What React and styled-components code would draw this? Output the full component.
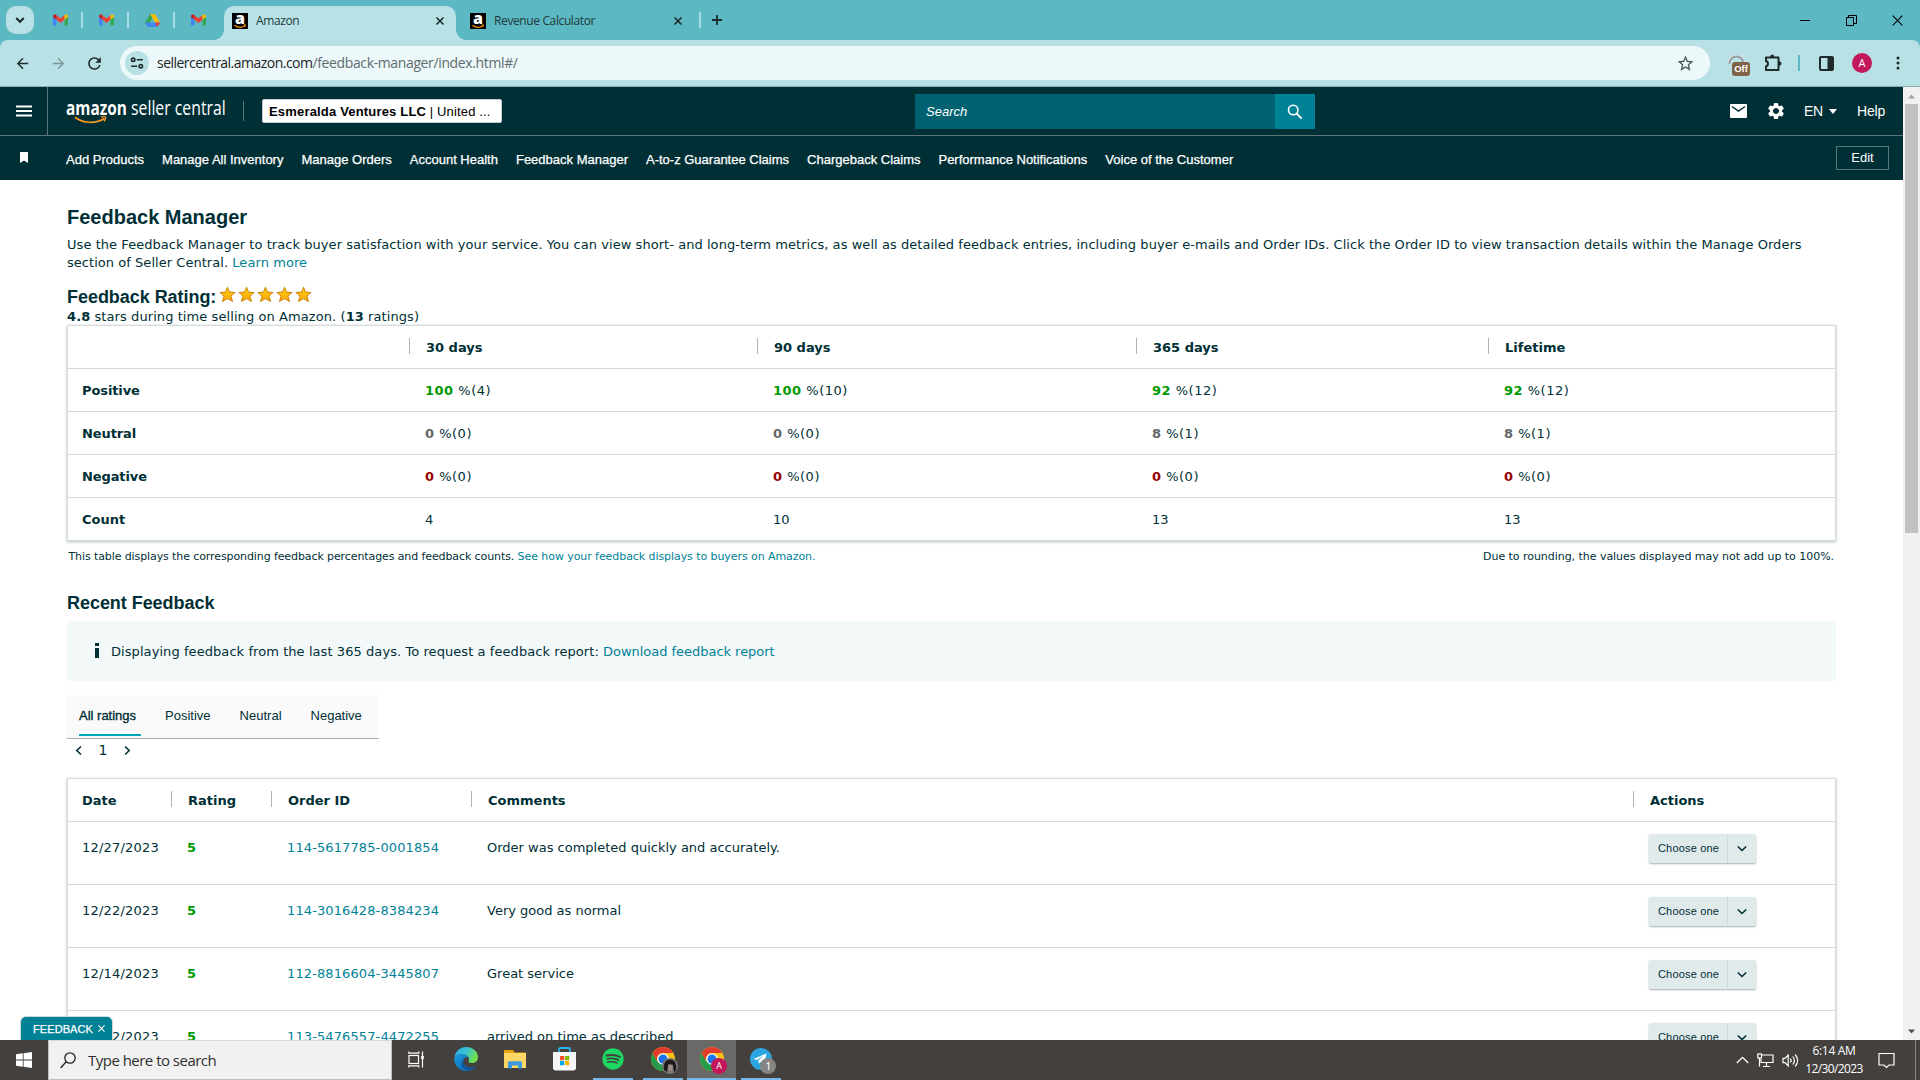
import React from 'react';
import styled, { createGlobalStyle, css } from 'styled-components';
import { MdArrowBack, MdArrowForward, MdRefresh, MdStarBorder, MdSettings } from 'react-icons/md';
import { FaSpotify } from 'react-icons/fa';

const arial = '"Liberation Sans", Arial, sans-serif';
const verdana = '"DejaVu Sans", Verdana, sans-serif';
const segoe = '"Open Sans", "Segoe UI", sans-serif';
const ink = '#002f36';
const link = '#008296';
const line = '#d5dbdb';

const GlobalStyle = createGlobalStyle`
  *, *::before, *::after { box-sizing: border-box; }
  html, body { margin: 0; padding: 0; overflow: hidden; }
  svg { display: block; flex: none; overflow: visible; }
`;

const Screen = styled.div`
  width: 1920px;
  height: 1080px;
  display: flex;
  flex-direction: column;
  overflow: hidden;
  background: #5cb8c2;
`;

const T = styled.span`
  letter-spacing: ${(p) => p.$ls || 0}px;
  white-space: pre;
`;

/* ---------- Browser chrome ---------- */

const TabStrip = styled.div`
  height: 40px;
  flex: none;
  display: flex;
  align-items: center;
  padding-left: 6px;
  font: 12px ${segoe};
  color: #1f3a3d;
`;

const TabSearch = styled.div`
  width: 28px;
  height: 28px;
  border-radius: 10px;
  background: #b8e1e5;
  display: flex;
  align-items: center;
  justify-content: center;
  margin-right: 3px;
`;

const PinnedTab = styled.div`
  width: 46px;
  height: 16px;
  display: flex;
  align-items: center;
  justify-content: center;
  border-right: ${(p) => (p.$last ? 'none' : '2px solid #a9dce1')};
  padding-left: ${(p) => (p.$last ? '0' : '2px')};
`;

const Tab = styled.div`
  position: relative;
  height: 34px;
  align-self: flex-end;
  display: flex;
  align-items: center;
  width: ${(p) => p.$w}px;
  margin-left: ${(p) => (p.$active ? 3 : 0)}px;
  padding: 0 ${(p) => (p.$active ? 12 : 9)}px 5px ${(p) => (p.$active ? 8 : 14)}px;
  gap: 8px;
  border-radius: 10px 10px 0 0;
  ${(p) =>
    p.$active &&
    css`
      background: #b8e1e5;
      &::before,
      &::after {
        content: '';
        position: absolute;
        bottom: 0;
        width: 10px;
        height: 10px;
      }
      &::before {
        left: -10px;
        background: radial-gradient(circle at 0 0, transparent 9.5px, #b8e1e5 10px);
      }
      &::after {
        right: -10px;
        background: radial-gradient(circle at 100% 0, transparent 9.5px, #b8e1e5 10px);
      }
    `}
`;

const TabTitle = styled.span`
  flex: 1;
  letter-spacing: -0.38px;
`;

const NewTab = styled.div`
  display: flex;
  align-items: center;
  height: 16px;
  border-left: 2px solid #a9dce1;
  padding-left: 10px;
  margin-left: 8px;
`;

const WindowButtons = styled.div`
  margin-left: auto;
  display: flex;
  align-items: center;
  height: 40px;
`;

const WinBtn = styled.div`
  width: 46px;
  display: flex;
  justify-content: center;
`;

const Toolbar = styled.div`
  height: 47px;
  flex: none;
  display: flex;
  align-items: center;
  padding-left: 4px;
  background: #b8e1e5;
  border-bottom: 1px solid #86abb0;
  border-radius: 8px 8px 0 0;
  color: #1f2a2c;
`;

const ToolBtn = styled.div`
  width: 36px;
  display: flex;
  justify-content: center;
  opacity: ${(p) => (p.$dim ? 0.4 : 1)};
`;

const Omnibox = styled.div`
  width: 1590px;
  height: 34px;
  margin-left: 8px;
  border-radius: 17px;
  background: #ecf8f9;
  display: flex;
  align-items: center;
  padding: 0 15px 0 5px;
  font: 14px/20px ${segoe};
  color: #1d2426;
`;

const SiteInfo = styled.div`
  width: 24px;
  height: 24px;
  border-radius: 50%;
  background: #b8e1e5;
  display: flex;
  align-items: center;
  justify-content: center;
  margin-right: 8px;
`;

const UrlPath = styled.span`
  color: #5f6d6f;
  letter-spacing: -0.37px;
  flex: 1;
`;

const ToolbarRight = styled.div`
  flex: 1;
  display: flex;
  align-items: center;
  padding-left: 18px;
`;

const OffExtension = styled.div`
  width: 22px;
  height: 22px;
  margin: 4px 14px 0 0;
  display: flex;
  align-items: flex-end;
  justify-content: flex-end;
  background: radial-gradient(ellipse at 50% 100%, transparent 50%, #7c8486 54%, #d9dede 72%, transparent 76%) 0 1px / 17px 9px no-repeat;
`;

const OffBadge = styled.span`
  width: 18px;
  height: 14px;
  border-radius: 3px;
  background: #7f6344;
  color: #fff;
  font: bold 9.5px/14px ${arial};
  text-align: center;
`;

const ToolDivider = styled.div`
  width: 2px;
  height: 16px;
  background: #5cb8c2;
  margin: 0 19px 0 16px;
`;

const Avatar = styled.div`
  width: 20px;
  height: 20px;
  border-radius: 50%;
  background: #c2185b;
  color: #fff;
  font: 11px/20px ${segoe};
  text-align: center;
  margin: 0 24px 0 18px;
`;

/* ---------- Viewport ---------- */

const Viewport = styled.div`
  height: 953px;
  flex: none;
  display: flex;
  overflow: hidden;
  background: #fff;
  position: relative;
`;

const Page = styled.div`
  width: 1903px;
  flex: none;
  color: ${ink};
`;

const Scrollbar = styled.div`
  width: 17px;
  display: flex;
  flex-direction: column;
  align-items: center;
  justify-content: space-between;
  background: #f1f1f1;
  padding: 7px 0 6px;
`;

const ScrollThumb = styled.div`
  width: 13px;
  height: 429px;
  margin-top: 5px;
  margin-bottom: auto;
  background: #c1c1c1;
`;

const TopBar = styled.div`
  height: 49px;
  display: flex;
  align-items: center;
  background: ${ink};
  border-bottom: 1px solid #5b7679;
  color: #fff;
  font: 14px ${arial};
`;

const MenuCell = styled.div`
  width: 48px;
  height: 48px;
  border-right: 1px solid #5b7679;
  display: flex;
  align-items: center;
  justify-content: center;
`;

const Logo = styled.div`
  width: 178px;
  height: 20px;
  margin-left: 18px;
  border-right: 1px solid #5b7679;
  display: flex;
  align-items: center;
  position: relative;
`;

const LogoWord = styled.span`
  width: ${(p) => p.$w}px;
  font: ${(p) => (p.$bold ? 700 : 400)} 19.5px/20px ${segoe};
  transform: scaleX(${(p) => p.$scale});
  transform-origin: 0 50%;
  white-space: pre;
  margin-top: -6px;
`;

const Smile = styled.svg`
  position: absolute;
  left: 8px;
  top: 15px;
`;

const Merchant = styled.div`
  width: 240px;
  height: 24px;
  margin-left: 18px;
  padding-left: 6px;
  background: #fff;
  border: 1px solid #c6cfd0;
  border-radius: 2px;
  color: #000;
  font: 13px/23px ${arial};
  white-space: pre;
`;

const SearchBox = styled.div`
  width: 400px;
  height: 35px;
  margin-left: 413px;
  display: flex;
  margin-top: 1px;
`;

const SearchInput = styled.div`
  width: 360px;
  padding-left: 11px;
  background: #006270;
  font: italic 13px/35px ${arial};
`;

const SearchButton = styled.div`
  flex: 1;
  background: ${link};
  display: flex;
  align-items: center;
  justify-content: center;
`;

const TopActions = styled.div`
  flex: 1;
  display: flex;
  align-items: center;
  justify-content: flex-end;
  padding-right: 18px;
`;

const GearWrap = styled.div`
  margin: 0 18px 0 19px;
`;

const Lang = styled.div`
  display: flex;
  align-items: center;
  gap: 6px;
  margin-right: 20px;
  letter-spacing: -0.2px;
`;

const Caret = styled.div`
  width: 0;
  height: 0;
  border-left: 4.5px solid transparent;
  border-right: 4.5px solid transparent;
  border-top: 5px solid #fff;
`;

const NavBar = styled.nav`
  height: 44px;
  display: flex;
  align-items: center;
  gap: 18px;
  padding: 2px 14px 0 20px;
  background: ${ink};
  color: #fff;
  font: 13px ${arial};
`;

const NavLink = styled.span`
  -webkit-text-stroke: 0.25px;
  white-space: nowrap;
`;

const Bookmark = styled.div`
  width: 28px;
  padding-bottom: 3px;
`;

const EditButton = styled.div`
  margin-left: auto;
  margin-top: -3px;
  width: 53px;
  height: 24px;
  border: 1px solid #5b7679;
  text-align: center;
  line-height: 21px;
`;

const Main = styled.main`
  padding: 24px 0 0 67px;
  width: 1836px;
  font: 13px/18px ${verdana};
`;

const H1 = styled.h1`
  margin: 0;
  font: bold 20px/26px ${arial};
`;

const H2 = styled.h2`
  margin: ${(p) => p.$mt}px 0 0;
  font: bold 18px/${(p) => p.$lh}px ${arial};
  letter-spacing: -0.045px;
  display: flex;
`;

const Intro = styled.p`
  margin: 6px 0 0;
  white-space: nowrap;
`;

const Link = styled.a`
  color: ${link};
  letter-spacing: ${(p) => p.$ls || 0}px;
`;

const Stars = styled.span`
  display: flex;
  gap: 2px;
  padding-left: 3px;
`;

const RatingLine = styled.div`
  height: 16px;
  line-height: 16px;
  letter-spacing: 0.08px;
`;

const Table = styled.div`
  width: 1769px;
  margin-top: ${(p) => p.$mt || 0}px;
  border: 1px solid ${line};
  box-shadow: 0 1px 3px rgba(0, 47, 54, 0.3);
`;

const Row = styled.div`
  display: grid;
  grid-template-columns: ${(p) => p.$cols};
  height: ${(p) => p.$h}px;
  align-items: ${(p) => (p.$top ? 'start' : 'center')};
  border-bottom: 1px solid ${line};
  &:last-child {
    border-bottom: none;
    height: ${(p) => p.$h - 1}px;
  }
`;

const Th = styled.div`
  height: 16px;
  margin-top: -2px;
  padding-left: ${(p) => (p.$first ? 14 : 16)}px;
  border-left: ${(p) => (p.$first ? 'none' : '1px solid #aab7b8')};
  font-weight: bold;
  line-height: 20px;
  white-space: nowrap;
`;

const Td = styled.div`
  padding-left: ${(p) => (p.$first ? 14 : 16)}px;
  padding-top: ${(p) => p.$pt ?? 2}px;
  font-weight: ${(p) => (p.$bold ? 'bold' : 'normal')};
  white-space: nowrap;
  letter-spacing: ${(p) => p.$ls || 0}px;
`;

const Value = styled.b`
  color: ${(p) => p.$color};
`;

const Notes = styled.div`
  display: flex;
  justify-content: space-between;
  margin-top: 8px;
  padding: 0 2px 0 1.5px;
  font-size: 11px;
  line-height: 16px;
  letter-spacing: -0.1px;
`;

const InfoBox = styled.div`
  width: 1769px;
  height: 60px;
  margin-top: 6px;
  padding: 2px 0 0 28px;
  background: #f3f8f9;
  display: flex;
  align-items: center;
`;

const InfoMark = styled.div`
  width: 4px;
  height: 15px;
  margin: -3px 12px 0 0;
  background: linear-gradient(${ink} 0 3px, transparent 3px 5px, ${ink} 5px);
`;

const Tabs = styled.div`
  width: 312px;
  height: 44px;
  margin-top: 14px;
  padding-left: 12px;
  background: #fafafa;
  border-bottom: 1px solid #aaacac;
  display: flex;
  gap: 24px;
  font: 13px ${arial};
`;

const RatingTab = styled.div`
  height: 41px;
  line-height: 42px;
  padding-right: 5px;
  letter-spacing: ${(p) => p.$ls || 0}px;
  border-bottom: ${(p) => (p.$active ? '2px solid #00a4b4' : 'none')};
  -webkit-text-stroke: ${(p) => (p.$active ? '0.35px' : '0')};
`;

const Pager = styled.div`
  height: 22px;
  display: flex;
  align-items: center;
  gap: 14.5px;
  padding-left: 7px;
  font: 14px ${verdana};
`;

const ActionButton = styled.div`
  width: 107px;
  height: 29px;
  margin-top: 12px;
  display: flex;
  border-radius: 2px;
  background: #e1eaeb;
  box-shadow: 0 1px 2px rgba(0, 30, 36, 0.35);
  font: 11px/28px ${arial};
  letter-spacing: 0.17px;
`;

const ActionLabel = styled.span`
  width: 79px;
  padding-left: 9px;
  border-right: 1px solid #cfdadb;
`;

const ActionArrow = styled.span`
  flex: 1;
  display: flex;
  align-items: center;
  justify-content: center;
`;

const FeedbackBadge = styled.div`
  position: absolute;
  left: 20px;
  bottom: 0;
  width: 93px;
  height: 24px;
  padding-left: 12px;
  display: flex;
  align-items: center;
  gap: 5px;
  border: 1px solid #cfdadb;
  border-bottom: none;
  border-radius: 6px 6px 0 0;
  background: ${link};
  color: #fff;
  font: 11px ${arial};
  letter-spacing: 0.08px;
  -webkit-text-stroke: 0.25px;
`;

/* ---------- Taskbar ---------- */

const Taskbar = styled.div`
  height: 40px;
  flex: none;
  display: flex;
  align-items: center;
  background: #43403e;
  color: #fff;
  font: 12px ${segoe};
`;

const Start = styled.div`
  width: 48px;
  padding-left: 16px;
`;

const TaskSearch = styled.div`
  width: 344px;
  height: 40px;
  padding-left: 11px;
  display: flex;
  align-items: center;
  gap: 12px;
  background: #f1f1f1;
  border: 1px solid #bfbfbf;
  border-top-color: #d8d8d8;
  color: #2f2f2f;
  font-size: 15px;
  letter-spacing: -0.52px;
`;

const TaskApps = styled.div`
  display: flex;
`;

const TaskApp = styled.div`
  width: 49.2px;
  height: 40px;
  display: flex;
  align-items: center;
  justify-content: center;
  background: ${(p) => (p.$active ? '#6b6967' : 'transparent')};
  border-bottom: ${(p) => (p.$active ? '2px solid #76b9ed' : '2px solid transparent')};
  ${(p) =>
    p.$running &&
    css`
      border-bottom: none;
      background: linear-gradient(#76b9ed, #76b9ed) 50% 100% / 40px 2px no-repeat;
      padding-bottom: 2px;
    `}
  position: relative;
`;

const AppBadge = styled.div`
  position: absolute;
  left: 24px;
  top: 18px;
  width: 16px;
  height: 16px;
  border-radius: 50%;
  background: ${(p) => p.$bg};
  font: ${(p) => p.$font}px/16px ${segoe};
  text-align: center;
`;

const Tray = styled.div`
  margin-left: auto;
  display: flex;
  align-items: center;
  height: 40px;
`;

const TrayIcons = styled.div`
  display: flex;
  align-items: center;
  gap: 8px;
`;

const Clock = styled.div`
  width: 60px;
  margin: 0 14px 0 5px;
  text-align: center;
  line-height: 18px;
  white-space: nowrap;
`;

const ShowDesktop = styled.div`
  width: 5px;
  height: 40px;
  margin-left: 20px;
  border-left: 1px solid #8a8886;
`;

/* ---------- Drawings ---------- */

const Gmail = () => (
  <svg width="15" height="12" viewBox="0 0 15 12">
    <path d="M0 2v8.6c0 .6.4 1 1 1h2.500V5z" fill="#4285f4" />
    <path d="M15 2v8.6c0 .6-.4 1-1 1h-2.500V5z" fill="#34a853" />
    <path d="M3.500 1.200 7.500 4.300l4-3.100v4.500L7.500 8.900 3.500 5.700z" fill="#ea4335" />
    <path d="M11.500 5.700V1.200l.6-.4C13.300-.1 15 .6 15 2v1z" fill="#fbbc04" />
    <path d="M3.500 5.700V1.200l-.6-.4C1.700-.1 0 .6 0 2v1z" fill="#c5221f" />
  </svg>
);

const Drive = () => (
  <svg width="15" height="13" viewBox="0 0 15 13">
    <path d="M5 0h5l5 8.600h-5z" fill="#fbbc04" />
    <path d="M5 8.600h10L12.400 13H2.600z" fill="#4285f4" />
    <path d="M10 8.600h5L12.400 13z" fill="#ea4335" />
    <path d="M2.500 4.300 5 0l2.500 4.300L2.600 13 0 8.600z" fill="#34a853" />
    <path d="M0 8.600h5L2.600 13z" fill="#4285f4" />
    <path d="M7.500 4.300 10 8.600H5z" fill="#5cb8c2" />
  </svg>
);

const AmazonIcon = () => (
  <svg width="16" height="16" viewBox="0 0 16 16">
    <rect width="16" height="16" fill="#000" />
    <text x="8" y="10.800" textAnchor="middle" fill="#fff" fontFamily="Open Sans" fontWeight="800" fontSize="16">a</text>
    <path d="M2.500 12.300c3.500 2.500 7.500 2.500 10.500.4" stroke="#f90" strokeWidth="1.300" fill="none" />
    <path d="M11.500 12l2-.2-.5 1.900" stroke="#f90" strokeWidth="1" fill="none" />
  </svg>
);

const Cross = ({ size = 8, w = 1.6, color = '#1f2a2c' }) => (
  <svg width={size} height={size} viewBox="0 0 8 8" stroke={color} strokeWidth={w} fill="none">
    <path d="M.5.5l7 7M7.500.5l-7 7" />
  </svg>
);

const Glyph = ({ d, w = 10, h = 10, sw = 1.6, color = ink }) => (
  <svg width={w} height={h} viewBox={`0 0 ${w} ${h}`} stroke={color} strokeWidth={sw} fill="none">
    <path d={d} />
  </svg>
);

const Tune = () => (
  <svg width="14" height="14" viewBox="0 0 14 14" fill="none" stroke="#1f2a2c" strokeWidth="1.600">
    <circle cx="3.200" cy="3.800" r="1.700" />
    <path d="M6.800 3.800h6M1.200 10.200h6" />
    <circle cx="10.800" cy="10.200" r="1.700" />
  </svg>
);

const Puzzle = () => (
  <svg width="18" height="18" viewBox="0 0 18 18" fill="none">
    <path d="M2 3.500h12.500v12.500H2v-3.700c2.600-.3 2.600-4.800 0-5.100z" stroke="#1f2a2c" strokeWidth="2" strokeLinejoin="round" />
    <path d="M6 3a2.200 2.500 0 0 1 4.400 0zM15 7.300a2.500 2.200 0 0 1 0 4.400z" fill="#1f2a2c" />
  </svg>
);

const SidePanel = () => (
  <svg width="15" height="15" viewBox="0 0 15 15">
    <rect x="1" y="1" width="13" height="13" rx="1" fill="none" stroke="#1f2a2c" strokeWidth="2" />
    <rect x="8.500" y="1" width="5.500" height="13" fill="#1f2a2c" />
  </svg>
);

const Dots = () => (
  <svg width="4" height="14" viewBox="0 0 4 14" fill="#1f2a2c">
    <circle cx="2" cy="2" r="1.500" />
    <circle cx="2" cy="7" r="1.500" />
    <circle cx="2" cy="12" r="1.500" />
  </svg>
);

const Magnifier = () => (
  <svg width="16" height="16" viewBox="0 0 16 16" fill="none" stroke="#fff">
    <circle cx="6.200" cy="6" r="4.700" strokeWidth="1.600" />
    <path d="M9.600 9.400l5 5.200" strokeWidth="2" />
  </svg>
);

const Mail = () => (
  <svg width="17" height="14" viewBox="0 0 17 14">
    <rect width="17" height="14" rx="1" fill="#fff" />
    <path d="M2 2.500l6.500 4.500L15 2.500" stroke={ink} strokeWidth="1.500" fill="none" />
  </svg>
);

const Star = () => (
  <svg width="17" height="17" viewBox="0 0 17 17">
    <defs>
      <linearGradient id="gold" x1="0" y1="0" x2="0" y2="1">
        <stop offset="0" stopColor="#ffcf1a" />
        <stop offset="1" stopColor="#fba800" />
      </linearGradient>
    </defs>
    <path d="M8.500 1.200l2 4.900 5.600.4-4.200 3.600 1.700 5.400-5.100-2.900-5.100 2.900 1.700-5.400L.9 6.500l5.600-.4z" fill="url(#gold)" stroke="#c9820c" strokeWidth="1" strokeLinejoin="round" />
  </svg>
);

const WindowsLogo = () => (
  <svg width="16" height="16" viewBox="0 0 16 16" fill="#fff">
    <path d="M0 2.300l6.800-1v6.300H0zM7.600 1.200L16 0v7.600H7.600zM0 8.400h6.800v6.300L0 13.700zM7.600 8.400H16V16l-8.400-1.200z" />
  </svg>
);

const TaskMagnifier = () => (
  <svg width="16" height="17" viewBox="0 0 16 17" fill="none" stroke="#222" strokeWidth="1.300">
    <circle cx="10" cy="6" r="5.200" />
    <path d="M6.200 9.800L.6 16" />
  </svg>
);

const TaskView = () => (
  <svg width="17" height="17" viewBox="0 0 17 17" fill="none" stroke="#fff" strokeWidth="1.200">
    <rect x="1" y="4.500" width="9.500" height="8" />
    <path d="M.8.5v1.700h10V.5M.8 16.500v-1.700h10v1.700M14.500.5v16" />
    <rect x="13.200" y="5" width="2.600" height="3" fill="#fff" stroke="none" />
  </svg>
);

const Edge = () => (
  <svg width="24" height="24" viewBox="0 0 24 24">
    <defs>
      <linearGradient id="edgeTop" x1="0" y1="0" x2="1" y2=".4">
        <stop offset="0" stopColor="#2aa5e0" />
        <stop offset=".5" stopColor="#36c3d8" />
        <stop offset="1" stopColor="#6ee04a" />
      </linearGradient>
      <linearGradient id="edgeBody" x1="0" y1="0" x2="1" y2="1">
        <stop offset="0" stopColor="#1b9de2" />
        <stop offset="1" stopColor="#0c59a4" />
      </linearGradient>
    </defs>
    <path d="M.5 10.500C1.300 4.500 6 0 12 0c7 0 12 4.800 12 10.200 0 3.700-2.800 5.800-6 5.800-2.600 0-4-1-3.600-2 .9-1 .7-2.200.4-3C13 6.500 4 6 .5 10.500z" fill="url(#edgeTop)" />
    <path d="M.5 10.500C3.500 6 12.500 6 14.800 11c-1.500-1.300-4.300-1-5.300 1.500-1.600 4 2.500 9.500 9.500 7.500 1.300-.4 2.500-1.100 3.200-1.600C20.500 21.500 16.500 24 12 24 5 24-.6 18 .5 10.500z" fill="url(#edgeBody)" />
    <path d="M9.500 12.500c-1.600 4 2.500 9.500 9.500 7.500 1.300-.4 2.500-1.100 3.200-1.600-2.200 4-7 5.400-10 4.500-5-2-6.500-7-2.700-10.400z" fill="#124f96" opacity=".75" />
  </svg>
);

const Folder = () => (
  <svg width="22" height="19" viewBox="0 0 22 19">
    <path d="M0 0h9l2 2.500h11V6H0z" fill="#e5a50a" />
    <rect y="3" width="22" height="15" fill="#ffd767" />
    <path d="M4 18.500v-5.500c0-1.200.6-1.800 1.800-1.800h10.400c1.200 0 1.800.6 1.800 1.800v5.500h-4v-3H8v3z" fill="#3c9ade" />
  </svg>
);

const Store = () => (
  <svg width="23" height="24" viewBox="0 0 23 24">
    <path d="M6 6V2.500C6 1.600 6.500 1 7.500 1h8c1 0 1.500.6 1.500 1.500V6" fill="none" stroke="#2bb3ef" strokeWidth="1.800" />
    <path d="M0 5h23v16c0 1.500-1 2.500-2.500 2.500h-18C1 23.500 0 22.500 0 21z" fill="#f6f6f6" />
    <rect x="7" y="9" width="4.200" height="4.200" fill="#f25022" />
    <rect x="12" y="9" width="4.200" height="4.200" fill="#7fba00" />
    <rect x="7" y="14" width="4.200" height="4.200" fill="#00a4ef" />
    <rect x="12" y="14" width="4.200" height="4.200" fill="#ffb900" />
  </svg>
);

const Chrome = () => (
  <svg width="24" height="24" viewBox="0 0 24 24">
    <circle cx="12" cy="12" r="12" fill="#fbc116" />
    <path d="M1.600 6A12 12 0 0 0 12 24l5.200-9-5.200-3-5.200 3z" fill="#269b4a" />
    <path d="M1.600 6A12 12 0 0 1 22.400 6H12a6 6 0 0 0-5.200 9z" fill="#e33b2e" />
    <circle cx="12" cy="12" r="5.800" fill="#fff" />
    <circle cx="12" cy="12" r="4.500" fill="#1a73e8" />
  </svg>
);

const Portrait = () => (
  <svg width="16" height="16" viewBox="0 0 16 16">
    <circle cx="8" cy="8" r="8" fill="#777" />
    <path d="M2 12C1 5 4 1 8.500 1.500 13 2 15 6 14 12l-2 2.500L11 7 6.500 6 5 14z" fill="#1d1a1b" />
    <path d="M6.500 6.500l4 .5-.5 5-2 1.500-1.800-2z" fill="#a58d88" />
  </svg>
);

const Telegram = () => (
  <svg width="22" height="22" viewBox="0 0 22 22">
    <circle cx="11" cy="11" r="11" fill="#2ca5e0" />
    <path d="M3.500 11l13-5.500-2.200 11-3.500-2.600-2 1.900-.4-3.400 5-4.600-6.500 4.200z" fill="#fff" />
  </svg>
);

const Network = () => (
  <svg width="17" height="15" viewBox="0 0 17 15" fill="none" stroke="#fff" strokeWidth="1.200">
    <path d="M5 2h11v7.500H4V6" />
    <rect x=".8" y="1" width="3.700" height="4" />
    <path d="M2.500 5v8.500M9.500 9.500V13M6 13.500h7" />
  </svg>
);

const Volume = () => (
  <svg width="17" height="15" viewBox="0 0 17 15" fill="none" stroke="#fff" strokeWidth="1.200">
    <path d="M1 5.300h2L6.200 2v11L3 9.700H1z" />
    <path d="M8.500 5.500c.9 1.300.9 2.700 0 4M10.800 3.500c2 2.500 2 5.500 0 8M13.200 1.500c3 3.700 3 8.300 0 12" />
  </svg>
);

const Notification = () => (
  <svg width="17" height="17" viewBox="0 0 17 17" fill="none" stroke="#fff" strokeWidth="1.200">
    <path d="M1 1.500h15v11.500h-5l-2.500 2.500L6 13H1z" />
  </svg>
);

/* ---------- Data ---------- */

const navItems = [
  'Add Products',
  'Manage All Inventory',
  'Manage Orders',
  'Account Health',
  'Feedback Manager',
  'A-to-z Guarantee Claims',
  'Chargeback Claims',
  'Performance Notifications',
  'Voice of the Customer',
];

const green = '#009900';
const grey = '#666666';
const red = '#990000';

const summary = [
  { label: 'Positive', color: green, cells: [['100', '4'], ['100', '10'], ['92', '12'], ['92', '12']] },
  { label: 'Neutral', color: grey, cells: [['0', '0'], ['0', '0'], ['8', '1'], ['8', '1']] },
  { label: 'Negative', color: red, cells: [['0', '0'], ['0', '0'], ['0', '0'], ['0', '0']] },
];

const feedback = [
  ['12/27/2023', '5', '114-5617785-0001854', 'Order was completed quickly and accurately.'],
  ['12/22/2023', '5', '114-3016428-8384234', 'Very good as normal'],
  ['12/14/2023', '5', '112-8816604-3445807', 'Great service'],
  ['12/12/2023', '5', '113-5476557-4472255', 'arrived on time as described'],
];

const summaryCols = '341px 348px 379px 352px 1fr';
const feedbackCols = '103px 100px 200px 1162px 1fr';

export default function App() {
  return (
    <Screen>
      <GlobalStyle />
      <TabStrip>
        <TabSearch><Glyph w={10} h={8} sw={2} color="#1f2a2c" d="M1.200 2l3.800 3.800L8.800 2" /></TabSearch>
        <PinnedTab><Gmail /></PinnedTab>
        <PinnedTab><Gmail /></PinnedTab>
        <PinnedTab><Drive /></PinnedTab>
        <PinnedTab $last><Gmail /></PinnedTab>
        <Tab $w={232} $active>
          <AmazonIcon />
          <TabTitle>Amazon</TabTitle>
          <Cross />
        </Tab>
        <Tab $w={235}>
          <AmazonIcon />
          <TabTitle>Revenue Calculator</TabTitle>
          <Cross />
        </Tab>
        <NewTab>
          <Glyph w={12} h={12} sw={1.8} color="#1f2a2c" d="M6 1v10M1 6h10" />
        </NewTab>
        <WindowButtons>
          <WinBtn><Glyph w={10} h={10} sw={1} color="#000" d="M0 5.500h10" /></WinBtn>
          <WinBtn><Glyph w={11} h={11} sw={1} color="#000" d="M.5 2.500h7v8h-7zM2.500 2.500v-2h8v8h-3" /></WinBtn>
          <WinBtn><Cross size={11} w={0.8} color="#000" /></WinBtn>
        </WindowButtons>
      </TabStrip>

      <Toolbar>
        <ToolBtn><MdArrowBack size={17} /></ToolBtn>
        <ToolBtn $dim><MdArrowForward size={17} /></ToolBtn>
        <ToolBtn><MdRefresh size={19} /></ToolBtn>
        <Omnibox>
          <SiteInfo><Tune /></SiteInfo>
          <T $ls={-0.52}>sellercentral.amazon.com</T>
          <UrlPath>/feedback-manager/index.html#/</UrlPath>
          <MdStarBorder size={19} color="#4a5557" />
        </Omnibox>
        <ToolbarRight>
          <OffExtension><OffBadge>Off</OffBadge></OffExtension>
          <Puzzle />
          <ToolDivider />
          <SidePanel />
          <Avatar>A</Avatar>
          <Dots />
        </ToolbarRight>
      </Toolbar>

      <Viewport>
        <Page>
          <TopBar>
            <MenuCell><Glyph w={16} h={12} sw={2} color="#fff" d="M0 1.500h16M0 6h16M0 10.500h16" /></MenuCell>
            <Logo>
              <LogoWord $bold $w={65} $scale={0.79}>amazon</LogoWord>
              <LogoWord $w={94} $scale={0.81}>seller central</LogoWord>
              <Smile width="34" height="8" viewBox="0 0 34 8" fill="none" stroke="#f7981d">
                <path d="M1 1.200c8 6 20 7 29.500 1.300" strokeWidth="1.700" />
                <path d="M27 1.200c2-.6 4-.7 4.500 0s-.5 3-1.500 4.300" strokeWidth="1.300" />
              </Smile>
            </Logo>
            <Merchant><b><T $ls={0.18}>Esmeralda Ventures LLC</T></b> <T $ls={0.15}>| United ...</T></Merchant>
            <SearchBox>
              <SearchInput>Search</SearchInput>
              <SearchButton><Magnifier /></SearchButton>
            </SearchBox>
            <TopActions>
              <Mail />
              <GearWrap><MdSettings size={20} /></GearWrap>
              <Lang>EN<Caret /></Lang>
              <T $ls={-0.2}>Help</T>
            </TopActions>
          </TopBar>
          <NavBar>
            <Bookmark>
              <svg width="8" height="11" viewBox="0 0 8 11"><path d="M0 0h8v11L4 8.500 0 11z" fill="#fff" /></svg>
            </Bookmark>
            {navItems.map((n) => <NavLink key={n}>{n}</NavLink>)}
            <EditButton>Edit</EditButton>
          </NavBar>

          <Main>
            <H1>Feedback Manager</H1>
            <Intro>
              <T $ls={0.053}>Use the Feedback Manager to track buyer satisfaction with your service. You can view short- and long-term metrics, as well as detailed feedback entries, including buyer e-mails and Order IDs. Click the Order ID to view transaction details within the Manage Orders</T>
              <br />
              <T $ls={0.04}>section of Seller Central. </T><Link $ls={0.08}>Learn more</Link>
            </Intro>
            <H2 $mt={14} $lh={23}>
              Feedback Rating:
              <Stars>{[0, 1, 2, 3, 4].map((i) => <Star key={i} />)}</Stars>
            </H2>
            <RatingLine><b>4.8</b> stars during time selling on Amazon. (<b>13</b> ratings)</RatingLine>

            <Table>
              <Row $cols={summaryCols} $h={43}>
                <Th $first />
                {['30 days', '90 days', '365 days', 'Lifetime'].map((h) => <Th key={h}>{h}</Th>)}
              </Row>
              {summary.map((r) => (
                <Row key={r.label} $cols={summaryCols} $h={43}>
                  <Td $first $bold $ls={-0.1}>{r.label}</Td>
                  {r.cells.map(([v, c], i) => (
                    <Td key={i} $ls={0.5}><Value $color={r.color}>{v}</Value> %({c})</Td>
                  ))}
                </Row>
              ))}
              <Row $cols={summaryCols} $h={43}>
                <Td $first $bold>Count</Td>
                {['4', '10', '13', '13'].map((c, i) => <Td key={i}>{c}</Td>)}
              </Row>
            </Table>
            <Notes>
              <span>This table displays the corresponding feedback percentages and feedback counts. <Link $ls={-0.07}>See how your feedback displays to buyers on Amazon.</Link></span>
              <T $ls={-0.04}>Due to rounding, the values displayed may not add up to 100%.</T>
            </Notes>

            <H2 $mt={26} $lh={24}>Recent Feedback</H2>
            <InfoBox>
              <InfoMark />
              <T $ls={0.07}>Displaying feedback from the last 365 days. To request a feedback report: </T>
              <Link $ls={-0.03}>Download feedback report</Link>
            </InfoBox>

            <Tabs>
              <RatingTab $active>All ratings</RatingTab>
              <RatingTab>Positive</RatingTab>
              <RatingTab>Neutral</RatingTab>
              <RatingTab>Negative</RatingTab>
            </Tabs>
            <Pager>
              <Glyph w={10} h={11} d="M7 1.500L2.800 5.500 7 9.500" />
              1
              <Glyph w={10} h={11} d="M3 1.500l4.200 4L3 9.500" />
            </Pager>

            <Table $mt={17}>
              <Row $cols={feedbackCols} $h={43}>
                <Th $first>Date</Th>
                {['Rating', 'Order ID', 'Comments', 'Actions'].map((h) => <Th key={h}>{h}</Th>)}
              </Row>
              {feedback.map(([date, rating, id, comment]) => (
                <Row key={id} $cols={feedbackCols} $h={63} $top>
                  <Td $first $pt={17} $ls={0.2}>{date}</Td>
                  <Td $pt={17}><Value $color={green}>{rating}</Value></Td>
                  <Td $pt={17}><Link $ls={0.11}>{id}</Link></Td>
                  <Td $pt={17}>{comment}</Td>
                  <Td $pt={0}>
                    <ActionButton>
                      <ActionLabel>Choose one</ActionLabel>
                      <ActionArrow><Glyph w={10} h={8} sw={1.6} d="M.8 1.500L5 5.500l4.200-4" /></ActionArrow>
                    </ActionButton>
                  </Td>
                </Row>
              ))}
            </Table>
          </Main>
        </Page>
        <Scrollbar>
          <svg width="7" height="5" viewBox="0 0 7 4"><path d="M0 4l3.500-4L7 4z" fill="#a3a3a3" /></svg>
          <ScrollThumb />
          <svg width="7" height="5" viewBox="0 0 7 4"><path d="M0 0l3.500 4L7 0z" fill="#505050" /></svg>
        </Scrollbar>
        <FeedbackBadge>FEEDBACK<Cross size={7} w={1.2} color="#fff" /></FeedbackBadge>
      </Viewport>

      <Taskbar>
        <Start><WindowsLogo /></Start>
        <TaskSearch><TaskMagnifier />Type here to search</TaskSearch>
        <TaskApps>
          <TaskApp><TaskView /></TaskApp>
          <TaskApp><Edge /></TaskApp>
          <TaskApp><Folder /></TaskApp>
          <TaskApp><Store /></TaskApp>
          <TaskApp $running><FaSpotify size={22} color="#1ed760" /></TaskApp>
          <TaskApp $running><Chrome /><AppBadge><Portrait /></AppBadge></TaskApp>
          <TaskApp $active><Chrome /><AppBadge $bg="#c2185b" $font={9}>A</AppBadge></TaskApp>
          <TaskApp $running><Telegram /><AppBadge $bg="#858585" $font={11}>1</AppBadge></TaskApp>
        </TaskApps>
        <Tray>
          <TrayIcons>
            <Glyph w={13} h={8} sw={1.3} color="#fff" d="M.8 7l5.700-5.700L12.200 7" />
            <Network />
            <Volume />
          </TrayIcons>
          <Clock>
            <T $ls={-0.32}>6:14 AM</T><br />
            <T $ls={-0.62}>12/30/2023</T>
          </Clock>
          <Notification />
          <ShowDesktop />
        </Tray>
      </Taskbar>
    </Screen>
  );
}
